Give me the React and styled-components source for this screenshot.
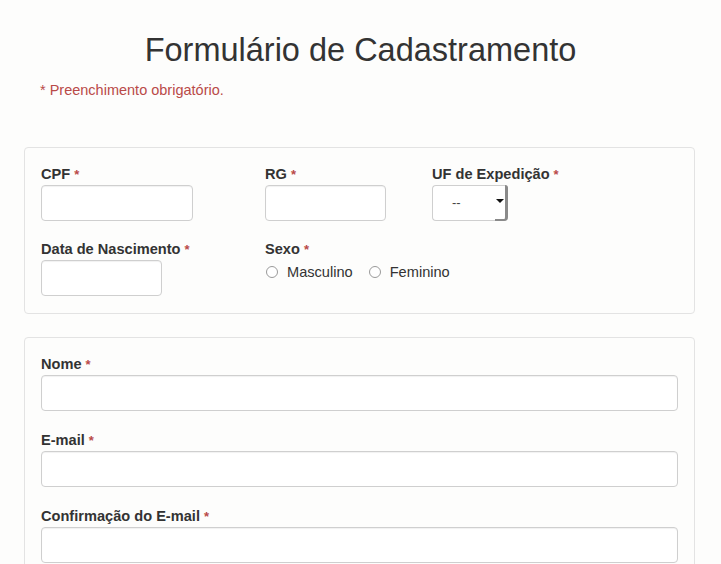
import styled, { createGlobalStyle } from "styled-components";

const GlobalStyle = createGlobalStyle`
  html, body {
    margin: 0;
    padding: 0;
    background: #fdfdfc;
  }
  body {
    font-family: "Liberation Sans", Arial, sans-serif;
    font-size: 14px;
    line-height: 20px;
    color: #333;
  }
`;

const Page = styled.div`
  padding: 0 26px 0 24px;
`;

const Title = styled.h1`
  margin: 33px -26px 0 -24px;
  font-size: 32.5px;
  font-weight: 400;
  line-height: 1.1;
  text-align: center;
  color: #333;
`;

const Note = styled.p`
  margin: 11px 0 0 16px;
  font-size: 14.5px;
  color: #b94a48;
`;

const Panel = styled.div`
  margin-top: ${(p) => p.$top}px;
  padding: 16px 16px 17px;
  border: 1px solid #e3e3e3;
  border-radius: 4px;
  background: #fdfdfc;
`;

const Grid = styled.div`
  display: grid;
  grid-template-columns: 224px 167px 1fr;
  row-gap: 18px;
`;

const Stack = styled.div`
  display: flex;
  flex-direction: column;
  gap: 19px;
`;

const Field = styled.div`
  display: flex;
  flex-direction: column;
  align-items: flex-start;
`;

const Label = styled.label`
  display: block;
  height: 20px;
  margin-bottom: 1px;
  font-size: 14.6px;
  font-weight: 700;
  line-height: 20px;
  color: #333;
`;

const Req = styled.span`
  margin-left: 4px;
  font-size: 13px;
  line-height: 0;
  color: #b94a48;
`;

const Input = styled.input`
  box-sizing: border-box;
  width: ${(p) => (p.$w ? `${p.$w}px` : "100%")};
  height: 36px;
  padding: 6px 12px;
  border: 1px solid #cfcfcf;
  border-radius: 4px;
  background: #fff;
  box-shadow: inset 0 1px 1px rgba(0, 0, 0, 0.06);
  font: inherit;
  outline: none;
`;

const Select = styled.div`
  position: relative;
  box-sizing: border-box;
  width: 76px;
  height: 36px;
  padding-left: 19px;
  border: 1px solid #cfcfcf;
  border-right: none;
  border-radius: 4px;
  background: #fff;
  display: flex;
  align-items: center;
  font-size: 13px;
  color: #444;
`;

const SelectButton = styled.span`
  position: absolute;
  top: -1px;
  right: 0;
  bottom: -1px;
  width: 10px;
  border-right: 3px solid #8a8a8a;
  border-bottom: 2px solid #8a8a8a;
  border-radius: 0 3px 4px 0;
  display: flex;
  align-items: center;
  justify-content: center;

  &::after {
    content: "";
    border-left: 4px solid transparent;
    border-right: 4px solid transparent;
    border-top: 4px solid #111;
    margin-top: -2px;
  }
`;

const Radios = styled.div`
  display: flex;
  align-items: center;
  margin-top: 2px;
  font-size: 14.6px;
  line-height: 20px;
`;

const RadioOption = styled.label`
  display: flex;
  align-items: center;
  margin-right: 15px;
`;

const Radio = styled.input`
  appearance: none;
  width: 12px;
  height: 12px;
  margin: 0 9px 0 1px;
  border: 1px solid #9a9a9a;
  border-radius: 50%;
  background: #fff;
`;

const Required = () => <Req>*</Req>;

export default function App() {
  return (
    <>
      <GlobalStyle />
      <Page>
        <Title>Formulário de Cadastramento</Title>
        <Note>* Preenchimento obrigatório.</Note>

        <Panel $top={47}>
          <Grid>
            <Field>
              <Label>
                CPF<Required />
              </Label>
              <Input $w={152} />
            </Field>
            <Field>
              <Label>
                RG<Required />
              </Label>
              <Input $w={121} />
            </Field>
            <Field>
              <Label>
                UF de Expedição<Required />
              </Label>
              <Select>
                --
                <SelectButton />
              </Select>
            </Field>
            <Field>
              <Label>
                Data de Nascimento<Required />
              </Label>
              <Input $w={121} />
            </Field>
            <Field>
              <Label>
                Sexo<Required />
              </Label>
              <Radios>
                <RadioOption>
                  <Radio type="radio" name="sexo" />
                  Masculino
                </RadioOption>
                <RadioOption>
                  <Radio type="radio" name="sexo" />
                  Feminino
                </RadioOption>
              </Radios>
            </Field>
          </Grid>
        </Panel>

        <Panel $top={23}>
          <Stack>
            <Field>
              <Label>
                Nome<Required />
              </Label>
              <Input />
            </Field>
            <Field>
              <Label>
                E-mail<Required />
              </Label>
              <Input />
            </Field>
            <Field>
              <Label>
                Confirmação do E-mail<Required />
              </Label>
              <Input />
            </Field>
          </Stack>
        </Panel>
      </Page>
    </>
  );
}
